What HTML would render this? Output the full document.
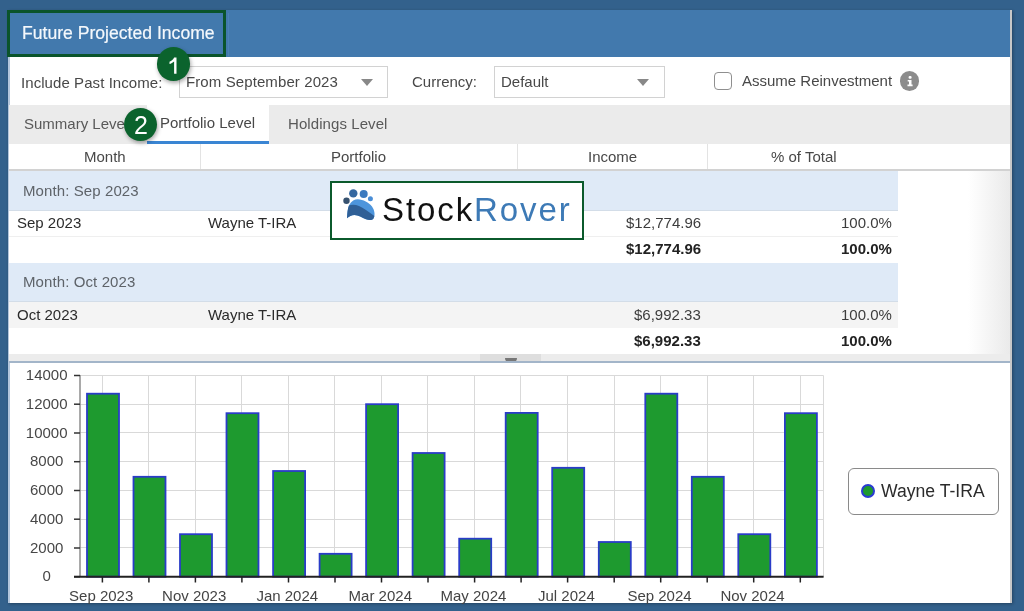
<!DOCTYPE html>
<html><head><meta charset="utf-8">
<style>
*{box-sizing:border-box;margin:0;padding:0}
html,body{width:1024px;height:611px;overflow:hidden}
body{background:#33618c;font-family:"Liberation Sans",sans-serif;position:relative}
.abs{position:absolute}
.t{position:absolute;white-space:nowrap;line-height:1;will-change:transform}
</style></head><body>
<!-- panel -->
<div class="abs" style="left:8px;top:10px;width:1004px;height:593px;background:#fff;border-left:2px solid #b3c6dc;border-right:2px solid #c8c8c8;box-shadow:1px 1px 3px rgba(0,0,0,.3)"></div>
<!-- header -->
<div class="abs" style="left:8px;top:10px;width:1002px;height:47px;background:#4279ad"></div>
<div class="t" style="left:22.3px;top:25px;font-size:17.6px;color:#f4f8fc;-webkit-text-stroke:0.2px #f4f8fc">Future Projected Income</div>
<div class="abs" style="left:7px;top:10px;width:219px;height:47px;border:3px solid #0a542b"></div>
<div class="abs" style="left:228px;top:13px;width:1px;height:43px;background:#4a82b6"></div>
<!-- toolbar -->
<div class="t" style="left:21.2px;top:75px;font-size:15px;letter-spacing:0.07px;color:#484848">Include Past Income:</div>
<div class="abs" style="left:179px;top:66px;width:209px;height:32px;border:1px solid #d2d2d2;background:#fff"></div>
<div class="t" style="left:186.3px;top:74px;font-size:15px;letter-spacing:0.1px;color:#484848">From September 2023</div>
<div class="abs" style="left:360.6px;top:78.7px;width:0;height:0;border-left:6px solid transparent;border-right:6px solid transparent;border-top:7px solid #888"></div>
<div class="t" style="left:411.7px;top:73.7px;font-size:15px;color:#484848">Currency:</div>
<div class="abs" style="left:494px;top:66px;width:171px;height:32px;border:1px solid #d2d2d2;background:#fff"></div>
<div class="t" style="left:501px;top:74px;font-size:15px;color:#484848">Default</div>
<div class="abs" style="left:636.6px;top:78.7px;width:0;height:0;border-left:6px solid transparent;border-right:6px solid transparent;border-top:7px solid #888"></div>
<div class="abs" style="left:713.8px;top:72.3px;width:18px;height:17.7px;border:1.7px solid #8f8f8f;border-radius:4px"></div>
<div class="t" style="left:741.7px;top:73px;font-size:15px;color:#484848">Assume Reinvestment</div>
<div class="abs" style="left:899.7px;top:71px;width:19.5px;height:19.5px;border-radius:50%;background:#8c8c8c"></div>
<svg class="abs" style="left:899.5px;top:71px" width="20" height="20" viewBox="0 0 20 20"><rect x="8.6" y="5" width="3" height="2.7" rx="1.2" fill="#fff"/><path d="M7.7 9H11.5V13.6H12.6V15.2H7.5V13.6H9V10.4H7.7Z" fill="#fff"/></svg>
<!-- tabs -->
<div class="abs" style="left:9px;top:105px;width:1001px;height:39px;background:#ebebeb"></div>
<div class="abs" style="left:147px;top:105px;width:122px;height:39px;background:#fff;border-bottom:3px solid #3a85d3"></div>
<div class="t" style="left:23.5px;top:115.8px;font-size:15px;color:#595959">Summary Level</div>
<div class="t" style="left:159.5px;top:114.8px;font-size:15px;color:#484848">Portfolio Level</div>
<div class="t" style="left:288.2px;top:115.8px;font-size:15px;letter-spacing:0.08px;color:#595959">Holdings Level</div>
<!-- column header -->
<div class="abs" style="left:9px;top:144px;width:1001px;height:25px;background:#fff"></div>
<div class="abs" style="left:9px;top:169px;width:1001px;height:2px;background:#d2d2d2"></div>
<div class="abs" style="left:199.5px;top:144px;width:1px;height:25px;background:#e3e3e3"></div>
<div class="abs" style="left:516.5px;top:144px;width:1px;height:25px;background:#e3e3e3"></div>
<div class="abs" style="left:707px;top:144px;width:1px;height:25px;background:#e3e3e3"></div>
<div class="t" style="left:84.2px;top:148.8px;font-size:15px;color:#484848">Month</div>
<div class="t" style="left:331.2px;top:148.8px;font-size:15px;color:#484848">Portfolio</div>
<div class="t" style="left:587.5px;top:148.8px;font-size:15px;color:#484848">Income</div>
<div class="t" style="left:770.5px;top:148.8px;font-size:15px;color:#484848">% of Total</div>
<!-- scrollbar track right -->
<div class="abs" style="left:968px;top:171px;width:42px;height:183px;background:linear-gradient(to right,#fff,#fafafa 25%,#eaeaea)"></div>
<!-- group 1 -->
<div class="abs" style="left:9px;top:171px;width:889px;height:40px;background:#dfeaf7;border-bottom:1px solid #d3dde8"></div>
<div class="t" style="left:22.6px;top:182.5px;font-size:15px;letter-spacing:0.1px;color:#5e6369">Month: Sep 2023</div>
<div class="abs" style="left:9px;top:211px;width:889px;height:26px;background:#fff;border-bottom:1px solid #efefef"></div>
<div class="t" style="left:16.9px;top:215px;font-size:15px;color:#2b2b2b">Sep 2023</div>
<div class="t" style="left:207.6px;top:215px;font-size:15px;color:#2b2b2b">Wayne T-IRA</div>
<div class="t" style="left:626px;top:215px;font-size:15px;color:#3d3d3d">$12,774.96</div>
<div class="t" style="left:840.5px;top:215px;font-size:15px;color:#3d3d3d">100.0%</div>
<div class="abs" style="left:9px;top:237px;width:889px;height:26px;background:#fff"></div>
<div class="t" style="left:626px;top:241.2px;font-size:15px;font-weight:700;color:#222">$12,774.96</div>
<div class="t" style="left:840.5px;top:241.2px;font-size:15px;font-weight:700;color:#222">100.0%</div>
<!-- group 2 -->
<div class="abs" style="left:9px;top:263px;width:889px;height:39px;background:#dfeaf7;border-bottom:1px solid #d3dde8"></div>
<div class="t" style="left:22.6px;top:274px;font-size:15px;letter-spacing:0.1px;color:#5e6369">Month: Oct 2023</div>
<div class="abs" style="left:9px;top:302px;width:889px;height:26px;background:#f4f4f4"></div>
<div class="t" style="left:16.9px;top:306.7px;font-size:15px;color:#2b2b2b">Oct 2023</div>
<div class="t" style="left:207.6px;top:306.7px;font-size:15px;color:#2b2b2b">Wayne T-IRA</div>
<div class="t" style="left:634.4px;top:306.7px;font-size:15px;color:#3d3d3d">$6,992.33</div>
<div class="t" style="left:840.5px;top:306.7px;font-size:15px;color:#3d3d3d">100.0%</div>
<div class="abs" style="left:9px;top:328px;width:889px;height:26px;background:#fff"></div>
<div class="t" style="left:634.4px;top:332.5px;font-size:15px;font-weight:700;color:#222">$6,992.33</div>
<div class="t" style="left:840.5px;top:332.5px;font-size:15px;font-weight:700;color:#222">100.0%</div>
<!-- splitter -->
<div class="abs" style="left:9px;top:354px;width:1001px;height:7px;background:#ececec"></div>
<div class="abs" style="left:480px;top:354px;width:61px;height:7px;background:#dedede"></div>
<div class="abs" style="left:505px;top:357.5px;width:12px;height:4px;background:#777;border-radius:0 0 6px 6px"></div>
<div class="abs" style="left:9px;top:361px;width:1001px;height:2px;background:#a3b5c9"></div>
<!-- logo -->
<div class="abs" style="left:330px;top:181px;width:254.2px;height:58.8px;background:#fff;border:2.7px solid #0b5a2c"></div>
<svg class="abs" style="left:338px;top:184px" width="44" height="44" viewBox="0 0 44 44">
<circle cx="8.5" cy="16.7" r="3.2" fill="#36516f"/>
<circle cx="15.3" cy="9.4" r="4.2" fill="#3467a0"/>
<circle cx="25.7" cy="10.1" r="4" fill="#3b7abf"/>
<circle cx="32.4" cy="14.8" r="2.5" fill="#4a8ed6"/>
<path d="M9 34.2 C9.3 29 9.5 24.5 11.5 20.5 C13.5 16.8 17 15.2 20 15.3 C25 15.5 31 18.5 34 22.5 C36.5 26 37.5 31 35.5 34.5 C34 36.5 31 36.5 28 35.3 C24 33.8 20.5 31 16.5 31 C13.5 31 11 32.5 9 34.2Z" fill="#4d95dc"/>
<path d="M9 34.2 C9.3 29.5 9.6 25 10.9 21.6 C13.5 20.5 17.5 20.6 21 22 C25.5 23.8 30 27.5 36.4 32 C36.1 33 35.9 33.8 35.5 34.5 C34 36.5 31 36.5 28 35.3 C24 33.8 20.5 31 16.5 31 C13.5 31 11 32.5 9 34.2Z" fill="#2f5f96"/>
</svg>
<div class="t" style="left:382px;top:192.7px;font-size:33px;letter-spacing:1.9px;color:#111">Stock<span style="color:#3d7ab6">Rover</span></div>
<!-- badges -->
<div class="abs" style="left:157px;top:47.3px;width:33.3px;height:33.3px;border-radius:50%;background:#0b632d;box-shadow:1px 2px 4px rgba(0,0,0,.35)"></div>
<svg class="abs" style="left:0;top:0" width="200" height="80" viewBox="0 0 200 80"><path d="M174.1 57.5H176.5V73.7H174.1V61.4C172.8 62.6 171.1 63.5 169.5 64V61.7C171.6 60.9 173.2 59.5 174.1 57.5Z" fill="#fff"/></svg>
<div class="abs" style="left:124.2px;top:108px;width:33.3px;height:33.3px;border-radius:50%;background:#0b632d;box-shadow:1px 2px 4px rgba(0,0,0,.35)"></div>
<div class="t" style="left:133.5px;top:113px;font-size:25px;color:#fff">2</div>
<!-- chart -->
<svg class="abs" style="left:0;top:0;will-change:transform" width="1024" height="611" viewBox="0 0 1024 611">
<line x1="80" y1="547.5" x2="823.5" y2="547.5" stroke="#d9d9d9" stroke-width="1"/><line x1="80" y1="519.5" x2="823.5" y2="519.5" stroke="#d9d9d9" stroke-width="1"/><line x1="80" y1="490.5" x2="823.5" y2="490.5" stroke="#d9d9d9" stroke-width="1"/><line x1="80" y1="461.5" x2="823.5" y2="461.5" stroke="#d9d9d9" stroke-width="1"/><line x1="80" y1="432.5" x2="823.5" y2="432.5" stroke="#d9d9d9" stroke-width="1"/><line x1="80" y1="404.5" x2="823.5" y2="404.5" stroke="#d9d9d9" stroke-width="1"/><line x1="80" y1="375.5" x2="823.5" y2="375.5" stroke="#d9d9d9" stroke-width="1"/><line x1="102.5" y1="375.5" x2="102.5" y2="577" stroke="#d9d9d9" stroke-width="1"/><line x1="148.5" y1="375.5" x2="148.5" y2="577" stroke="#d9d9d9" stroke-width="1"/><line x1="195.5" y1="375.5" x2="195.5" y2="577" stroke="#d9d9d9" stroke-width="1"/><line x1="241.5" y1="375.5" x2="241.5" y2="577" stroke="#d9d9d9" stroke-width="1"/><line x1="288.5" y1="375.5" x2="288.5" y2="577" stroke="#d9d9d9" stroke-width="1"/><line x1="334.5" y1="375.5" x2="334.5" y2="577" stroke="#d9d9d9" stroke-width="1"/><line x1="381.5" y1="375.5" x2="381.5" y2="577" stroke="#d9d9d9" stroke-width="1"/><line x1="427.5" y1="375.5" x2="427.5" y2="577" stroke="#d9d9d9" stroke-width="1"/><line x1="474.5" y1="375.5" x2="474.5" y2="577" stroke="#d9d9d9" stroke-width="1"/><line x1="520.5" y1="375.5" x2="520.5" y2="577" stroke="#d9d9d9" stroke-width="1"/><line x1="567.5" y1="375.5" x2="567.5" y2="577" stroke="#d9d9d9" stroke-width="1"/><line x1="614.5" y1="375.5" x2="614.5" y2="577" stroke="#d9d9d9" stroke-width="1"/><line x1="660.5" y1="375.5" x2="660.5" y2="577" stroke="#d9d9d9" stroke-width="1"/><line x1="707.5" y1="375.5" x2="707.5" y2="577" stroke="#d9d9d9" stroke-width="1"/><line x1="753.5" y1="375.5" x2="753.5" y2="577" stroke="#d9d9d9" stroke-width="1"/><line x1="800.5" y1="375.5" x2="800.5" y2="577" stroke="#d9d9d9" stroke-width="1"/><line x1="823.5" y1="375.5" x2="823.5" y2="577" stroke="#d9d9d9" stroke-width="1"/><rect x="87.0" y="393.7" width="32.0" height="183.0" fill="#1e9a2f" stroke="#2a3cc8" stroke-width="1.8"/><rect x="133.5" y="476.8" width="32.0" height="99.9" fill="#1e9a2f" stroke="#2a3cc8" stroke-width="1.8"/><rect x="180.0" y="534.2" width="32.0" height="42.5" fill="#1e9a2f" stroke="#2a3cc8" stroke-width="1.8"/><rect x="226.5" y="413.2" width="32.0" height="163.5" fill="#1e9a2f" stroke="#2a3cc8" stroke-width="1.8"/><rect x="273.1" y="471.0" width="32.0" height="105.7" fill="#1e9a2f" stroke="#2a3cc8" stroke-width="1.8"/><rect x="319.6" y="553.8" width="32.0" height="22.9" fill="#1e9a2f" stroke="#2a3cc8" stroke-width="1.8"/><rect x="366.1" y="404.2" width="32.0" height="172.5" fill="#1e9a2f" stroke="#2a3cc8" stroke-width="1.8"/><rect x="412.6" y="453.0" width="32.0" height="123.7" fill="#1e9a2f" stroke="#2a3cc8" stroke-width="1.8"/><rect x="459.2" y="538.7" width="32.0" height="38.0" fill="#1e9a2f" stroke="#2a3cc8" stroke-width="1.8"/><rect x="505.7" y="412.9" width="32.0" height="163.8" fill="#1e9a2f" stroke="#2a3cc8" stroke-width="1.8"/><rect x="552.2" y="467.8" width="32.0" height="108.9" fill="#1e9a2f" stroke="#2a3cc8" stroke-width="1.8"/><rect x="598.8" y="542.0" width="32.0" height="34.7" fill="#1e9a2f" stroke="#2a3cc8" stroke-width="1.8"/><rect x="645.3" y="393.7" width="32.0" height="183.0" fill="#1e9a2f" stroke="#2a3cc8" stroke-width="1.8"/><rect x="691.8" y="476.8" width="32.0" height="99.9" fill="#1e9a2f" stroke="#2a3cc8" stroke-width="1.8"/><rect x="738.3" y="534.2" width="32.0" height="42.5" fill="#1e9a2f" stroke="#2a3cc8" stroke-width="1.8"/><rect x="784.9" y="413.2" width="32.0" height="163.5" fill="#1e9a2f" stroke="#2a3cc8" stroke-width="1.8"/><line x1="80" y1="375" x2="80" y2="577" stroke="#8c8c8c" stroke-width="1.5"/><line x1="74" y1="576.7" x2="80" y2="576.7" stroke="#333" stroke-width="1.5"/><line x1="74" y1="548.0" x2="80" y2="548.0" stroke="#333" stroke-width="1.5"/><line x1="74" y1="519.2" x2="80" y2="519.2" stroke="#333" stroke-width="1.5"/><line x1="74" y1="490.5" x2="80" y2="490.5" stroke="#333" stroke-width="1.5"/><line x1="74" y1="461.7" x2="80" y2="461.7" stroke="#333" stroke-width="1.5"/><line x1="74" y1="433.0" x2="80" y2="433.0" stroke="#333" stroke-width="1.5"/><line x1="74" y1="404.2" x2="80" y2="404.2" stroke="#333" stroke-width="1.5"/><line x1="74" y1="375.5" x2="80" y2="375.5" stroke="#333" stroke-width="1.5"/><line x1="74" y1="576.7" x2="823.6" y2="576.7" stroke="#222" stroke-width="2"/><line x1="102.4" y1="577" x2="102.4" y2="582.5" stroke="#222" stroke-width="1.5"/><line x1="148.9" y1="577" x2="148.9" y2="582.5" stroke="#222" stroke-width="1.5"/><line x1="195.4" y1="577" x2="195.4" y2="582.5" stroke="#222" stroke-width="1.5"/><line x1="241.9" y1="577" x2="241.9" y2="582.5" stroke="#222" stroke-width="1.5"/><line x1="288.5" y1="577" x2="288.5" y2="582.5" stroke="#222" stroke-width="1.5"/><line x1="335.0" y1="577" x2="335.0" y2="582.5" stroke="#222" stroke-width="1.5"/><line x1="381.5" y1="577" x2="381.5" y2="582.5" stroke="#222" stroke-width="1.5"/><line x1="428.0" y1="577" x2="428.0" y2="582.5" stroke="#222" stroke-width="1.5"/><line x1="474.6" y1="577" x2="474.6" y2="582.5" stroke="#222" stroke-width="1.5"/><line x1="521.1" y1="577" x2="521.1" y2="582.5" stroke="#222" stroke-width="1.5"/><line x1="567.6" y1="577" x2="567.6" y2="582.5" stroke="#222" stroke-width="1.5"/><line x1="614.2" y1="577" x2="614.2" y2="582.5" stroke="#222" stroke-width="1.5"/><line x1="660.7" y1="577" x2="660.7" y2="582.5" stroke="#222" stroke-width="1.5"/><line x1="707.2" y1="577" x2="707.2" y2="582.5" stroke="#222" stroke-width="1.5"/><line x1="753.7" y1="577" x2="753.7" y2="582.5" stroke="#222" stroke-width="1.5"/><line x1="800.3" y1="577" x2="800.3" y2="582.5" stroke="#222" stroke-width="1.5"/>
<g font-family="Liberation Sans" font-size="15" fill="#474747"><text x="46.7" y="581.4" text-anchor="middle">0</text><text x="46.7" y="552.7" text-anchor="middle">2000</text><text x="46.7" y="523.9" text-anchor="middle">4000</text><text x="46.7" y="495.2" text-anchor="middle">6000</text><text x="46.7" y="466.4" text-anchor="middle">8000</text><text x="46.7" y="437.7" text-anchor="middle">10000</text><text x="46.7" y="408.9" text-anchor="middle">12000</text><text x="46.7" y="380.2" text-anchor="middle">14000</text></g>
<g font-family="Liberation Sans" font-size="15" fill="#444"><text x="101.2" y="601" text-anchor="middle">Sep 2023</text><text x="194.2" y="601" text-anchor="middle">Nov 2023</text><text x="287.3" y="601" text-anchor="middle">Jan 2024</text><text x="380.3" y="601" text-anchor="middle">Mar 2024</text><text x="473.4" y="601" text-anchor="middle">May 2024</text><text x="566.4" y="601" text-anchor="middle">Jul 2024</text><text x="659.5" y="601" text-anchor="middle">Sep 2024</text><text x="752.5" y="601" text-anchor="middle">Nov 2024</text></g>
</svg>
<!-- legend -->
<div class="abs" style="left:848.2px;top:468px;width:151px;height:46.5px;border:1.3px solid #8a8a8a;border-radius:6px;background:#fff"></div>
<div class="abs" style="left:860.8px;top:483.8px;width:14.4px;height:14.4px;border-radius:50%;background:#1e9a2f;border:2px solid #2a3bd2"></div>
<div class="t" style="left:881.3px;top:483px;font-size:17.6px;color:#2b2b2b">Wayne T-IRA</div>
</body></html>
